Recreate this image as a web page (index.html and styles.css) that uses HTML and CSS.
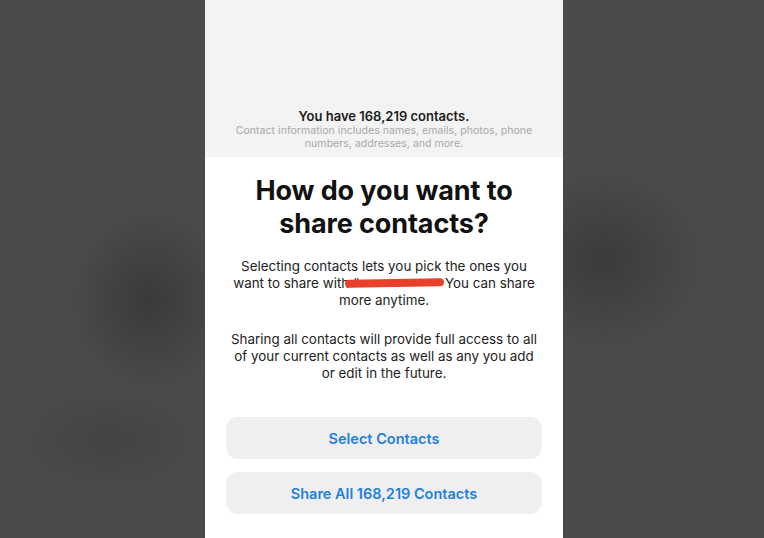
FILE: index.html
```html
<!DOCTYPE html>
<html lang="en">
<head>
  <meta charset="UTF-8" />
  <meta name="viewport" content="width=device-width, initial-scale=1.0" />
  <title>Share Contacts</title>
  <link rel="stylesheet" href="styles.css">
</head>
<body>
  <div class="backdrop left"></div>

  <div class="phone">
    <div class="summary">
      <p class="count">You have 168,219 contacts.</p>
      <p class="note">Contact information includes names, emails, photos, phone numbers, addresses, and more.</p>
    </div>

    <div class="sheet">
      <h1>How do you want to share contacts?</h1>
      <p class="copy">Selecting contacts lets you pick the ones you want to share with “<span class="redacted"></span>You can share more anytime.</p>
      <p class="copy">Sharing all contacts will provide full access to all of your current contacts as well as any you add or edit in the future.</p>

      <div class="actions">
        <button>Select Contacts</button>
        <button>Share All 168,219 Contacts</button>
      </div>
    </div>
  </div>

  <div class="backdrop right"></div>
</body>
</html>
```

FILE: styles.css
```css
body {
  margin: 0;
  height: 538px;
  overflow: hidden;
  display: grid;
  grid-template-columns: 205px 358px 1fr;
  font-family: Inter, "Noto Sans", sans-serif;
  background-color: #4a4a4a;
}

.backdrop {
  height: 100%;
}

.backdrop.left {
  background:
    radial-gradient(ellipse 80px 90px at 150px 300px, #3a3a3a, rgba(58, 58, 58, 0)),
    radial-gradient(ellipse 90px 50px at 110px 440px, #434343, rgba(67, 67, 67, 0)),
    #4a4a4a;
}

.backdrop.right {
  background:
    radial-gradient(ellipse 100px 90px at 40px 260px, #3b3b3b, rgba(59, 59, 59, 0)),
    #4a4a4a;
}

.phone {
  background-color: #ffffff;
  display: flex;
  flex-direction: column;
}

.summary {
  background-color: #f3f3f3;
  height: 157px;
  box-sizing: border-box;
  padding: 108px 24px 0;
  text-align: center;
}

.count {
  margin: 0;
  font-size: 13px;
  line-height: 16px;
  font-weight: 600;
  color: #1c1c1c;
}

.note {
  margin: 0;
  font-size: 10.6px;
  line-height: 13px;
  color: #a9a9a9;
}

.sheet {
  padding: 17px 21px 0;
  text-align: center;
}

h1 {
  margin: 0 auto;
  width: 280px;
  font-size: 27px;
  line-height: 33px;
  font-weight: 700;
  color: #111111;
  letter-spacing: -0.1px;
}

.copy {
  margin: 18px 0 0;
  font-size: 13.4px;
  line-height: 17px;
  color: #222222;
}

.copy + .copy {
  margin-top: 22px;
}

.redacted {
  display: inline-block;
  position: relative;
  width: 86px;
  height: 10px;
}

.redacted::after {
  content: "";
  position: absolute;
  left: -14px;
  right: 1px;
  top: 1px;
  height: 8px;
  border-radius: 4px;
  background-color: #e8402b;
  transform: rotate(-1deg);
}

.actions {
  margin-top: 35px;
  display: flex;
  flex-direction: column;
  gap: 13px;
}

button {
  height: 42px;
  border: none;
  border-radius: 12px;
  background-color: #efeff1;
  color: #1f7fdc;
  font-family: inherit;
  font-size: 14.5px;
  font-weight: 600;
  cursor: pointer;
}
```
